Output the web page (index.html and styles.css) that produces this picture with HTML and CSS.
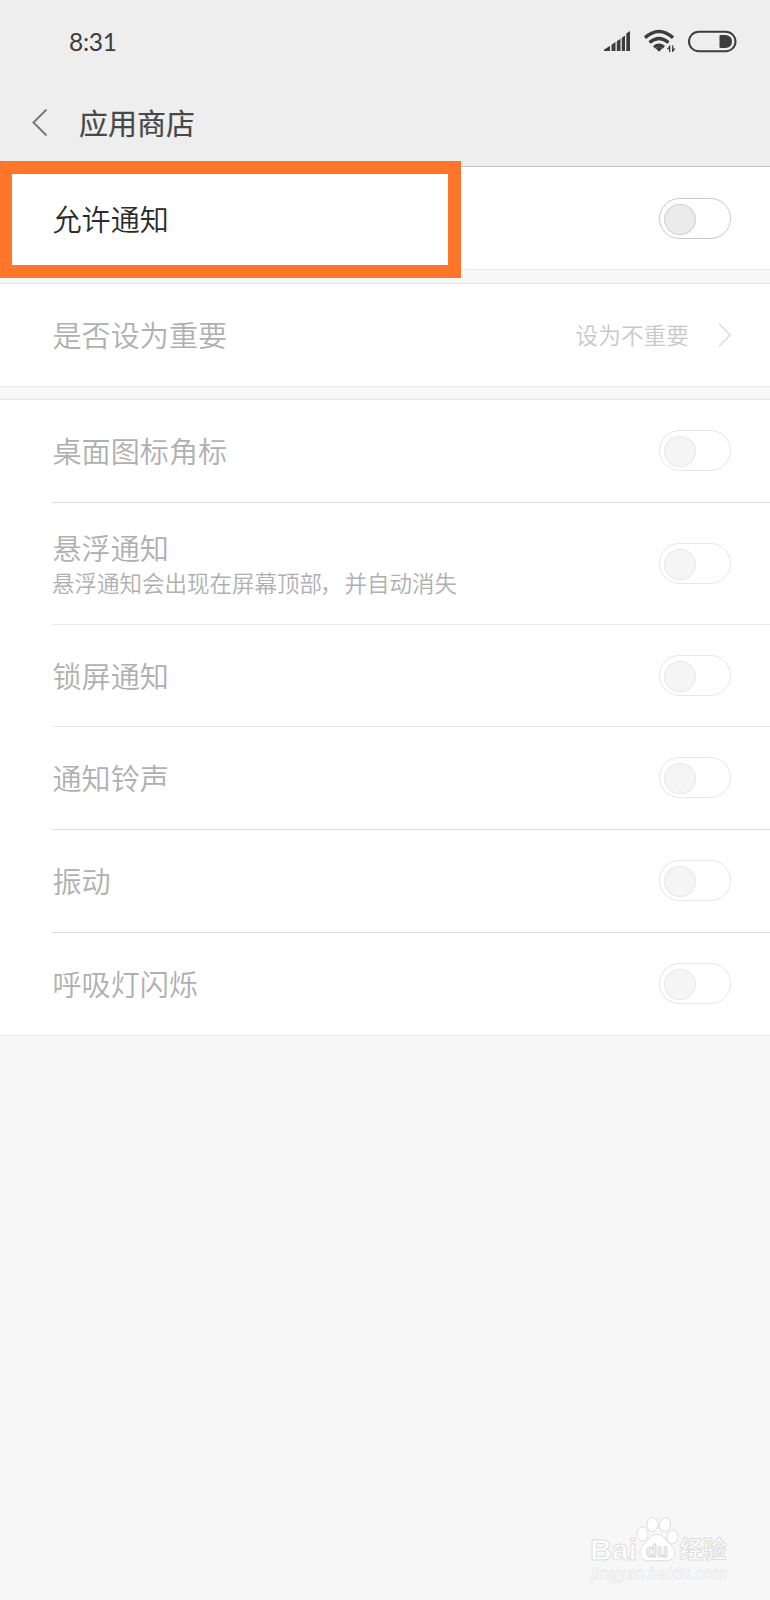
FILE: index.html
```html
<!DOCTYPE html>
<html lang="zh-CN">
<head>
<meta charset="utf-8">
<title>应用商店</title>
<link rel="stylesheet" href="styles.css">
</head>
<body>
<div class="screen">
  <header class="header">
    <div class="status">
      <span class="time">8:31</span>
      <svg class="status-icons" width="136" height="26" viewBox="602 28 136 26" fill="none" stroke="#3d3d3d">
        <path fill="#3d3d3d" stroke="none" d="M604 51v-1.300l6-4v5.300zM611.500 44.800l4-2.800v9h-4zM616.800 41.200l3.700-2.500V51h-3.700zM621.800 37.800l3.200-2.200V51h-3.200zM626.300 33.500l3.700-2.500v20h-3.700z"/>
        <path stroke-width="3.300" d="M645 37.700q14-12.500 28 0M649.500 42.600q9.500-8.300 19 0M654 47.300q5-4 10 0"/>
        <path fill="#3d3d3d" stroke="none" d="M655.500 48.200q3.500-2.400 7 0L659 51.800z"/>
        <path stroke-width="1.300" d="M669.700 45.500v6.500M667.500 49.300l2-2.500M672.700 52v-6.500M674.700 48.500l-2 2.600"/>
        <rect x="689" y="31.800" width="46.500" height="19.400" rx="9.700" stroke-width="2"/>
        <path fill="#3d3d3d" stroke="none" d="M720.500 35h5.500q6 1 6 6.500t-6 6.500h-5.500q-1 0-1-1v-11q0-1 1-1z"/>
      </svg>
    </div>
    <div class="titlebar">
      <svg class="back" width="18" height="30" viewBox="0 0 18 30"><path d="M15.500 1.500L2.500 14.500l13 13"/></svg>
      <h1 class="title">应用商店</h1>
    </div>
  </header>
  <main>
    <section class="group first">
      <div class="row active"><span class="label">允许通知</span><span class="toggle"></span></div>
      <div class="highlight"></div>
    </section>
    <section class="group disabled">
      <div class="row">
        <span class="label">是否设为重要</span>
        <span class="value">设为不重要</span>
        <svg class="next" width="14" height="26" viewBox="0 0 14 26"><path d="M1 1.500L12 13 1 24.500"/></svg>
      </div>
    </section>
    <section class="group disabled">
      <div class="row"><span class="label">桌面图标角标</span><span class="toggle"></span></div>
      <div class="row tall">
        <div class="copy"><span class="label">悬浮通知</span><span class="hint">悬浮通知会出现在屏幕顶部<span class="comma">，</span>并自动消失</span></div>
        <span class="toggle"></span>
      </div>
      <div class="row faint"><span class="label">锁屏通知</span><span class="toggle"></span></div>
      <div class="row faint"><span class="label">通知铃声</span><span class="toggle"></span></div>
      <div class="row"><span class="label">振动</span><span class="toggle"></span></div>
      <div class="row"><span class="label">呼吸灯闪烁</span><span class="toggle"></span></div>
    </section>
  </main>
  <svg class="watermark" width="150" height="84" viewBox="584 1510 150 84">
    <g class="mark">
      <text x="590" y="1560" font-size="30" textLength="47" lengthAdjust="spacingAndGlyphs">Bai</text>
      <ellipse cx="642.500" cy="1534" rx="5.500" ry="7"/>
      <ellipse cx="652.500" cy="1524.500" rx="5.500" ry="7"/>
      <ellipse cx="665" cy="1524.500" rx="5.500" ry="7" transform="rotate(12 665 1524.500)"/>
      <ellipse cx="672.500" cy="1537" rx="5.500" ry="7" transform="rotate(8 672.500 1537)"/>
      <path d="M657 1534.500c-7 0-9 6-13 10-4 4-5 8-3 12 3 6 9 4 16 4s13 2 17-4c2-4 0-9-4-12-4-4-6-10-13-10z"/>
      <text class="du" x="646" y="1557" font-size="19" textLength="22" lengthAdjust="spacingAndGlyphs">du</text>
      <text class="cn" x="679.500" y="1558" font-size="23.500">经验</text>
    </g>
    <text class="url" x="591" y="1579" font-size="16.500" textLength="136" lengthAdjust="spacingAndGlyphs">jingyan.baidu.com</text>
  </svg>
</div>
</body>
</html>
```
FILE: styles.css
```css
* { box-sizing: border-box; }
body {
  margin: 0;
  background: #f7f7f7;
  font-family: "Noto Sans CJK SC", "Noto Sans", sans-serif;
}
.screen { position: relative; height: 1600px; overflow: hidden; }
.header {
  height: 167px;
  background: #eeeeee;
  border-bottom: 1px solid #c6c6c6;
}
.status {
  display: flex;
  align-items: center;
  justify-content: space-between;
  height: 82px;
  padding: 0 32px 0 69px;
}
.time { font: 24.5px/30px Lato, sans-serif; letter-spacing: -0.3px; color: #3d3d3d; padding-top: 2px; }
.status-icons { display: block; }
.titlebar { display: flex; align-items: center; height: 82px; padding-left: 31px; }
.back { fill: none; stroke: #7c7c7c; stroke-width: 2; }
.title {
  margin: -2px 0 0 30px;
  font-size: 29px;
  line-height: 42px;
  font-weight: 400;
  color: #484848;
  -webkit-text-stroke: 0.2px #484848;
}
.group {
  margin-bottom: 12px;
  background: #fff;
  border-top: 1px solid #e6e6e6;
  border-bottom: 1px solid #ebebeb;
}
.group.first { position: relative; margin-bottom: 13px; border-top: 0; }
.row {
  position: relative;
  display: flex;
  align-items: center;
  height: 102px;
  margin-left: 52px;
  padding: 0 39px 0 0;
}
.row + .row { height: 103px; border-top: 1px solid #dcdcdc; }
.row + .tall { height: 122px; }
.row + .faint { height: 102px; border-top-color: #ebebeb; }
.row.faint + .faint { height: 103px; }
.label { font-size: 29.1px; line-height: 42px; font-weight: 350; color: #2b2b2b; padding: 0 0 1px 0.5px; }
.disabled .label { color: #b0b0b0; padding-bottom: 2px; }
.copy { display: flex; flex-direction: column; }
.copy .label { line-height: 35px; padding: 2px 0 0 0.5px; }
.hint { font-size: 22.5px; line-height: 34px; font-weight: 350; color: #b0b0b0; }
.comma { margin: 0 2px 0 -2px; }
.value { margin-left: auto; padding-bottom: 1px; font-size: 22.7px; font-weight: 350; color: #c8c8c8; }
.next { margin-left: 29px; margin-right: -1px; fill: none; stroke: #dcdcdc; stroke-width: 1.5; }
.toggle {
  width: 72px;
  height: 41px;
  margin-left: auto;
  padding: 5px 4px;
  border: 1px solid #c8c8c8;
  border-radius: 21px;
}
.toggle::before {
  content: "";
  display: block;
  width: 29.5px;
  height: 29px;
  border: 1px solid #d2d2d2;
  border-radius: 50%;
  background: #ebebeb;
}
.disabled .toggle { border-color: #e6e6e6; margin-bottom: 1px; }
.disabled .toggle::before { border-color: #e8e8e8; background: #f5f5f5; }
.highlight {
  position: absolute;
  left: 0;
  top: -6px;
  width: 461px;
  height: 117px;
  border: 13px solid #ff7529;
  border-left-width: 12px;
}
.watermark { position: absolute; left: 584px; top: 1510px; }
.mark { fill: #fff; stroke: #dedede; stroke-width: 1; font-family: "Liberation Sans", sans-serif; font-weight: 700; }
.cn { font-family: "Noto Sans CJK SC", sans-serif; }
.du { fill: #f4f4f4; stroke: #d8d8d8; }
.url { fill: #fff; stroke: #e2e2e2; stroke-width: .6; font-family: "Open Sans", sans-serif; font-weight: 600; }
```
